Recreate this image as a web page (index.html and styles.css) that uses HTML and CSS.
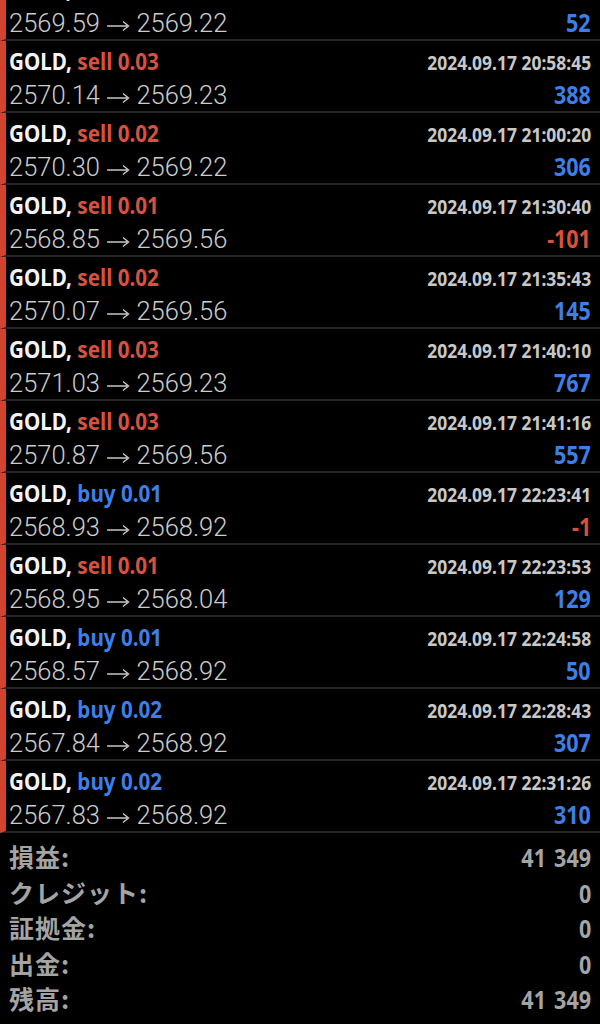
FILE: index.html
```html
<!DOCTYPE html>
<html>
<head>
  <title>History</title>
  <meta name="viewport" content="width=device-width, initial-scale=1.0">
  <link rel="stylesheet" href="styles.css">
</head>
<body>

  <div class="deals">
    <div class="deal">
      <div class="top"><span class="symbol">GOLD, <span class="sell">sell 0.03</span></span><span class="time">2024.09.17 20:50:12</span></div>
      <div class="bottom"><span class="prices">2569.59 <svg class="arrow" viewBox="0 0 24 12"><path d="M1 6H22.5M17 1.5L22.5 6L17 10.5"/></svg> 2569.22</span><span class="profit plus">52</span></div>
    </div>
    <div class="deal">
      <div class="top"><span class="symbol">GOLD, <span class="sell">sell 0.03</span></span><span class="time">2024.09.17 20:58:45</span></div>
      <div class="bottom"><span class="prices">2570.14 <svg class="arrow" viewBox="0 0 24 12"><path d="M1 6H22.5M17 1.5L22.5 6L17 10.5"/></svg> 2569.23</span><span class="profit plus">388</span></div>
    </div>
    <div class="deal">
      <div class="top"><span class="symbol">GOLD, <span class="sell">sell 0.02</span></span><span class="time">2024.09.17 21:00:20</span></div>
      <div class="bottom"><span class="prices">2570.30 <svg class="arrow" viewBox="0 0 24 12"><path d="M1 6H22.5M17 1.5L22.5 6L17 10.5"/></svg> 2569.22</span><span class="profit plus">306</span></div>
    </div>
    <div class="deal">
      <div class="top"><span class="symbol">GOLD, <span class="sell">sell 0.01</span></span><span class="time">2024.09.17 21:30:40</span></div>
      <div class="bottom"><span class="prices">2568.85 <svg class="arrow" viewBox="0 0 24 12"><path d="M1 6H22.5M17 1.5L22.5 6L17 10.5"/></svg> 2569.56</span><span class="profit minus">-101</span></div>
    </div>
    <div class="deal">
      <div class="top"><span class="symbol">GOLD, <span class="sell">sell 0.02</span></span><span class="time">2024.09.17 21:35:43</span></div>
      <div class="bottom"><span class="prices">2570.07 <svg class="arrow" viewBox="0 0 24 12"><path d="M1 6H22.5M17 1.5L22.5 6L17 10.5"/></svg> 2569.56</span><span class="profit plus">145</span></div>
    </div>
    <div class="deal">
      <div class="top"><span class="symbol">GOLD, <span class="sell">sell 0.03</span></span><span class="time">2024.09.17 21:40:10</span></div>
      <div class="bottom"><span class="prices">2571.03 <svg class="arrow" viewBox="0 0 24 12"><path d="M1 6H22.5M17 1.5L22.5 6L17 10.5"/></svg> 2569.23</span><span class="profit plus">767</span></div>
    </div>
    <div class="deal">
      <div class="top"><span class="symbol">GOLD, <span class="sell">sell 0.03</span></span><span class="time">2024.09.17 21:41:16</span></div>
      <div class="bottom"><span class="prices">2570.87 <svg class="arrow" viewBox="0 0 24 12"><path d="M1 6H22.5M17 1.5L22.5 6L17 10.5"/></svg> 2569.56</span><span class="profit plus">557</span></div>
    </div>
    <div class="deal">
      <div class="top"><span class="symbol">GOLD, <span class="buy">buy 0.01</span></span><span class="time">2024.09.17 22:23:41</span></div>
      <div class="bottom"><span class="prices">2568.93 <svg class="arrow" viewBox="0 0 24 12"><path d="M1 6H22.5M17 1.5L22.5 6L17 10.5"/></svg> 2568.92</span><span class="profit minus">-1</span></div>
    </div>
    <div class="deal">
      <div class="top"><span class="symbol">GOLD, <span class="sell">sell 0.01</span></span><span class="time">2024.09.17 22:23:53</span></div>
      <div class="bottom"><span class="prices">2568.95 <svg class="arrow" viewBox="0 0 24 12"><path d="M1 6H22.5M17 1.5L22.5 6L17 10.5"/></svg> 2568.04</span><span class="profit plus">129</span></div>
    </div>
    <div class="deal">
      <div class="top"><span class="symbol">GOLD, <span class="buy">buy 0.01</span></span><span class="time">2024.09.17 22:24:58</span></div>
      <div class="bottom"><span class="prices">2568.57 <svg class="arrow" viewBox="0 0 24 12"><path d="M1 6H22.5M17 1.5L22.5 6L17 10.5"/></svg> 2568.92</span><span class="profit plus">50</span></div>
    </div>
    <div class="deal">
      <div class="top"><span class="symbol">GOLD, <span class="buy">buy 0.02</span></span><span class="time">2024.09.17 22:28:43</span></div>
      <div class="bottom"><span class="prices">2567.84 <svg class="arrow" viewBox="0 0 24 12"><path d="M1 6H22.5M17 1.5L22.5 6L17 10.5"/></svg> 2568.92</span><span class="profit plus">307</span></div>
    </div>
    <div class="deal">
      <div class="top"><span class="symbol">GOLD, <span class="buy">buy 0.02</span></span><span class="time">2024.09.17 22:31:26</span></div>
      <div class="bottom"><span class="prices">2567.83 <svg class="arrow" viewBox="0 0 24 12"><path d="M1 6H22.5M17 1.5L22.5 6L17 10.5"/></svg> 2568.92</span><span class="profit plus">310</span></div>
    </div>
  </div>

  <div class="summary">
    <div class="line"><span class="label">損益:</span><span class="value">41 349</span></div>
    <div class="line"><span class="label">クレジット:</span><span class="value">0</span></div>
    <div class="line"><span class="label">証拠金:</span><span class="value">0</span></div>
    <div class="line"><span class="label">出金:</span><span class="value">0</span></div>
    <div class="line"><span class="label">残高:</span><span class="value">41 349</span></div>
  </div>

</body>
</html>
```

FILE: styles.css
```css
html, body {
  margin: 0;
  padding: 0;
  height: 100%;
  background: #000;
  overflow: hidden;
  font-family: "Liberation Sans", Arial, sans-serif;
}

/* Deal list, scrolled a bit so the first row is cut */
.deals {
  margin-top: -31px;
}

.deal {
  height: 72px;
  padding: 3px 9px 0 3px;
  box-sizing: border-box;
  border-left: 6px solid #d2432f;
  border-bottom: 2px solid #262626;
}

.top, .bottom {
  display: flex;
  justify-content: space-between;
  align-items: baseline;
}

.top {
  height: 33px;
  line-height: 33px;
}

.bottom {
  height: 34px;
  line-height: 34px;
}

/* no condensed face installed, so squeeze the bold one */
.symbol, .time, .profit, .value {
  display: inline-block;
  font-family: "Noto Sans", "Liberation Sans", sans-serif;
  font-weight: bold;
  white-space: nowrap;
}

.symbol {
  font-size: 24px;
  color: #f4f4f4;
  transform: scaleX(0.86);
  transform-origin: left center;
}

.sell {
  color: #d9503e;
}

.buy {
  color: #3d7fe6;
}

.time {
  font-size: 19.5px;
  color: #c8c8c8;
  transform: scaleX(0.895);
  transform-origin: right center;
}

.prices {
  font-family: Roboto, "Liberation Sans", sans-serif;
  font-weight: 300;
  font-size: 25.5px;
  color: #cccccc;
}

.arrow {
  width: 24px;
  height: 12px;
  fill: none;
  stroke: #c6c6c6;
  stroke-width: 1.4;
}

.profit {
  font-size: 25px;
  transform: scaleX(0.86);
  transform-origin: right center;
}

.profit.plus {
  color: #3d7fe6;
}

.profit.minus {
  color: #d9503e;
}

/* Account totals */
.summary {
  padding: 6px 9px 0 9px;
  height: 188px;
  border-bottom: 2px solid #262626;
}

.summary .line {
  display: flex;
  justify-content: space-between;
  align-items: baseline;
  height: 35.5px;
  line-height: 35.5px;
}

.label {
  font-family: "Noto Sans CJK JP", sans-serif;
  font-weight: bold;
  font-size: 25px;
  letter-spacing: 1px;
  color: #a4a4a4;
}

.value {
  font-size: 25px;
  color: #a4a4a4;
  word-spacing: 3px;
  transform: scaleX(0.86);
  transform-origin: right center;
}
```
